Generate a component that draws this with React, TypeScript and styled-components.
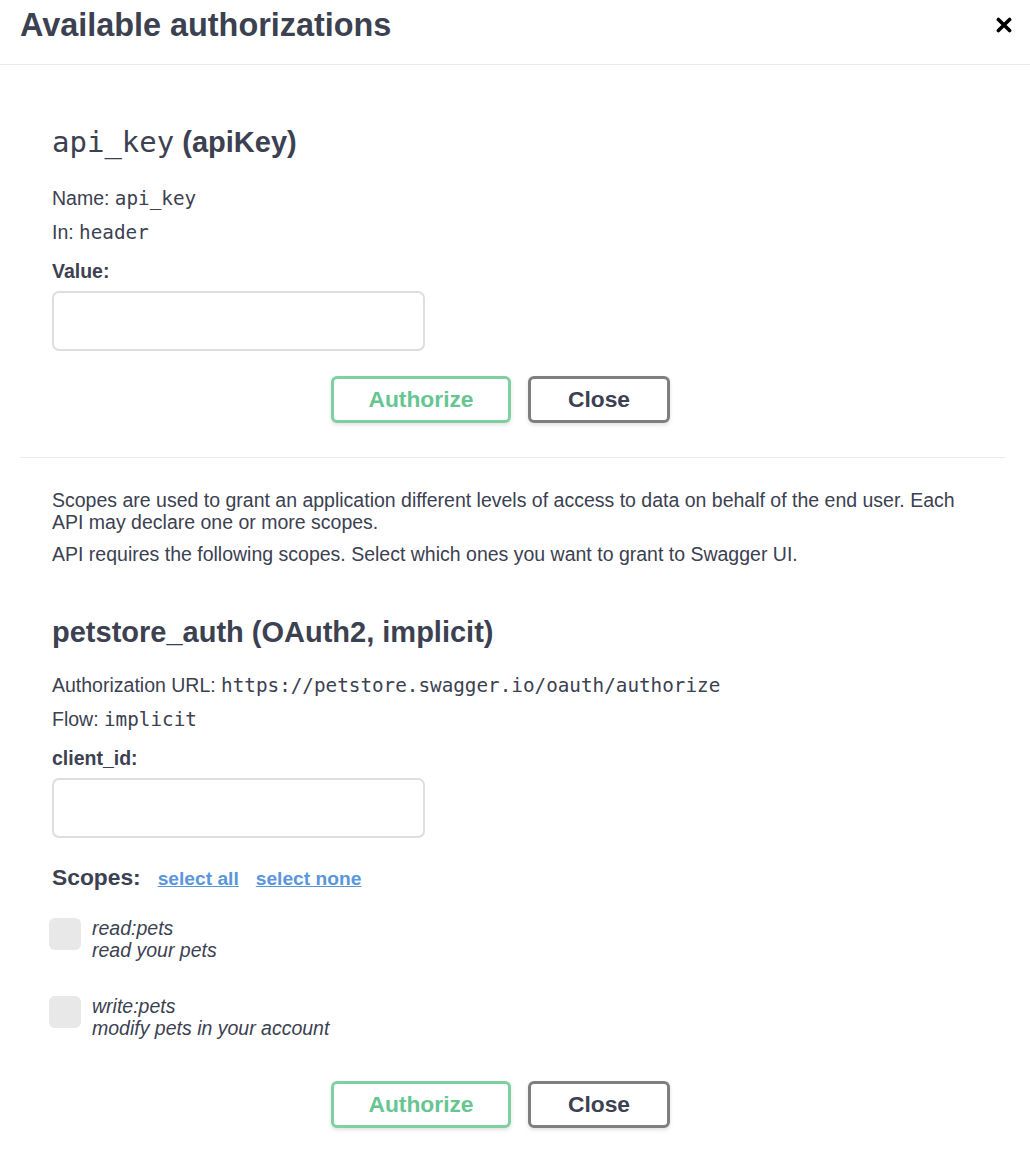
import React from 'react'
import styled, { createGlobalStyle } from 'styled-components'

const TEXT = '#3b4151'
const SANS = '"Liberation Sans", Arial, sans-serif'
const MONO = '"DejaVu Sans Mono", "Liberation Mono", monospace'

const GlobalStyle = createGlobalStyle`
  html, body {
    margin: 0;
    padding: 0;
    background: #fff;
  }
  body {
    font-family: ${SANS};
    color: ${TEXT};
  }
`

const Modal = styled.div`
  width: 1030px;
  background: #fff;
`

const Header = styled.div`
  display: flex;
  align-items: center;
  justify-content: space-between;
  height: 65px;
  padding: 0 18px 0 20px;
  border-bottom: 1px solid #ebebeb;
  box-sizing: border-box;
`

const Title = styled.h3`
  margin: 0 0 14px;
  font-size: 32.4px;
  line-height: 38px;
  font-weight: 700;
  color: ${TEXT};
`

const CloseIcon = styled.button`
  display: flex;
  border: none;
  background: none;
  padding: 0;
  margin-bottom: 14px;
  cursor: pointer;
`

const Content = styled.div`
  padding: 0 25px 0 20px;
`

const AuthContainer = styled.div<{ $last?: boolean }>`
  padding: ${(p) => (p.$last ? '31px 32px 24px' : '59px 32px 34px')};
  border-bottom: ${(p) => (p.$last ? 'none' : '1px solid #ebebeb')};
`

const SchemeTitle = styled.h4<{ $top?: number; $bottom: number }>`
  margin: ${(p) => p.$top || 0}px 0 ${(p) => p.$bottom}px;
  font-size: 29px;
  line-height: 36px;
  font-weight: 700;
  color: ${TEXT};
`

const Code = styled.code<{ $size?: number }>`
  font-family: ${MONO};
  font-weight: 400;
  font-size: ${(p) => p.$size || 19.3}px;
`

const Line = styled.p`
  margin: 0 0 9px;
  font-size: 19.5px;
  line-height: 24px;
  color: ${TEXT};
`

const Label = styled.label`
  display: block;
  margin: 14px 0 8px;
  font-size: 19.5px;
  line-height: 24px;
  font-weight: 700;
`

const Input = styled.input`
  display: block;
  width: 373px;
  height: 60px;
  box-sizing: border-box;
  margin: 0;
  border: 2px solid #dedede;
  border-radius: 7px;
  background: #fff;
  font-size: 18px;
  padding: 0 14px;
  outline: none;
`

const ButtonRow = styled.div<{ $top: number }>`
  display: flex;
  justify-content: center;
  gap: 17px;
  padding-right: 24px;
  margin-top: ${(p) => p.$top}px;
`

const Button = styled.button<{ $variant: 'authorize' | 'close' }>`
  height: 47px;
  box-sizing: border-box;
  padding: 0;
  width: ${(p) => (p.$variant === 'authorize' ? 180 : 142)}px;
  border-radius: 6px;
  background: #fff;
  font-family: ${SANS};
  font-size: 22.8px;
  font-weight: 700;
  cursor: pointer;
  border: 3px solid ${(p) => (p.$variant === 'authorize' ? '#7ecfa1' : '#7f7f81')};
  color: ${(p) => (p.$variant === 'authorize' ? '#66c691' : TEXT)};
  box-shadow: 0 2px 4px rgba(0, 0, 0, 0.12);
`

const Para = styled.p`
  margin: 0 0 10px;
  font-size: 19.5px;
  line-height: 22px;
`

const ScopesRow = styled.div`
  display: flex;
  align-items: baseline;
  gap: 17px;
  margin: 25px 0 24px;
  line-height: 28px;
`

const ScopesLabel = styled.span`
  font-size: 22.8px;
  font-weight: 700;
`

const LinkButton = styled.a`
  font-size: 19.2px;
  font-weight: 700;
  color: #5a96dc;
  text-decoration: underline;
  cursor: pointer;
`

const ScopeList = styled.div`
  display: flex;
  flex-direction: column;
  gap: 34px;
  margin-left: -3px;
  margin-bottom: 42px;
`

const ScopeItem = styled.label`
  display: flex;
  align-items: flex-start;
  gap: 11px;
`

const Checkbox = styled.span`
  flex: none;
  width: 32px;
  height: 32px;
  margin-top: 1px;
  border-radius: 6px;
  background: #e8e8e8;
`

const ScopeText = styled.span`
  display: flex;
  flex-direction: column;
  font-size: 19.5px;
  line-height: 22px;
  font-style: italic;
`

const scopes = [
  { name: 'read:pets', desc: 'read your pets' },
  { name: 'write:pets', desc: 'modify pets in your account' },
]

export default function App() {
  return (
    <Modal>
      <GlobalStyle />
      <Header>
        <Title>Available authorizations</Title>
        <CloseIcon aria-label="Close">
          <svg width="16" height="16" viewBox="0 0 20 20">
            <path
              d="M3 3 L17 17 M17 3 L3 17"
              stroke="#000"
              strokeWidth="4.5"
              strokeLinecap="round"
            />
          </svg>
        </CloseIcon>
      </Header>
      <Content>
        <AuthContainer>
          <SchemeTitle $bottom={26}>
            <Code $size={29}>api_key</Code> (apiKey)
          </SchemeTitle>
          <Line>
            Name: <Code>api_key</Code>
          </Line>
          <Line>
            In: <Code>header</Code>
          </Line>
          <Label>Value:</Label>
          <Input type="text" />
          <ButtonRow $top={25}>
            <Button $variant="authorize">Authorize</Button>
            <Button $variant="close">Close</Button>
          </ButtonRow>
        </AuthContainer>
        <AuthContainer $last>
          <Para>
            Scopes are used to grant an application different levels of access
            to data on behalf of the end user. Each API may declare one or more
            scopes.
          </Para>
          <Para>
            API requires the following scopes. Select which ones you want to
            grant to Swagger UI.
          </Para>
          <SchemeTitle $top={49} $bottom={23}>
            petstore_auth (OAuth2, implicit)
          </SchemeTitle>
          <Line>
            Authorization URL:{' '}
            <Code>https://petstore.swagger.io/oauth/authorize</Code>
          </Line>
          <Line>
            Flow: <Code>implicit</Code>
          </Line>
          <Label>client_id:</Label>
          <Input type="text" />
          <ScopesRow>
            <ScopesLabel>Scopes:</ScopesLabel>
            <LinkButton>select all</LinkButton>
            <LinkButton>select none</LinkButton>
          </ScopesRow>
          <ScopeList>
            {scopes.map((s) => (
              <ScopeItem key={s.name}>
                <Checkbox />
                <ScopeText>
                  <span>{s.name}</span>
                  <span>{s.desc}</span>
                </ScopeText>
              </ScopeItem>
            ))}
          </ScopeList>
          <ButtonRow $top={0}>
            <Button $variant="authorize">Authorize</Button>
            <Button $variant="close">Close</Button>
          </ButtonRow>
        </AuthContainer>
      </Content>
    </Modal>
  )
}
